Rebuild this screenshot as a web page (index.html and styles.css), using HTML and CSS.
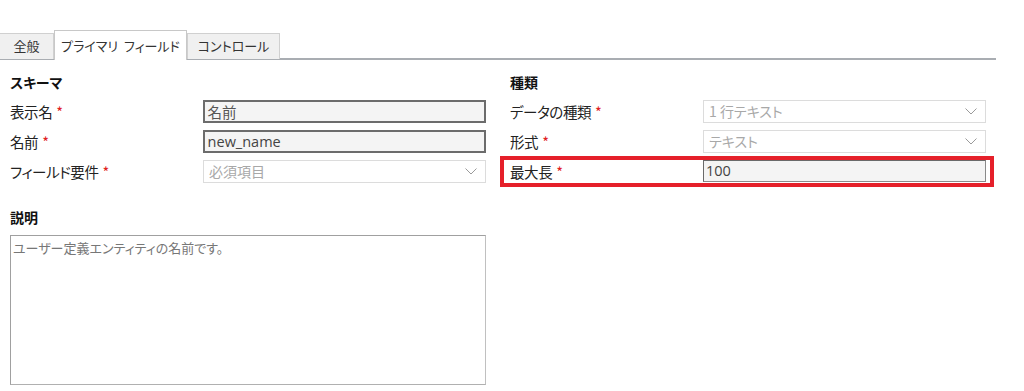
FILE: index.html
```html
<!DOCTYPE html>
<html lang="ja">
<head>
    <meta charset="UTF-8">
    <title>フィールド</title>
    <link rel="stylesheet" href="styles.css">
</head>
<body>
    <div class="tabbar">
        <div class="tab">全般</div>
        <div class="tab active">プライマリ フィールド</div>
        <div class="tab">コントロール</div>
    </div>

    <div class="form">
        <div class="column">
            <h2 class="heading">スキーマ</h2>
            <div class="row">
                <label class="label">表示名<span class="req">*</span></label>
                <div class="textbox">名前</div>
            </div>
            <div class="row">
                <label class="label">名前<span class="req">*</span></label>
                <div class="textbox latin">new_name</div>
            </div>
            <div class="row">
                <label class="label">フィールド要件<span class="req">*</span></label>
                <div class="select">必須項目
                    <svg class="chevron" width="12" height="7" viewBox="0 0 12 7"><polyline points="0.5,0.5 6,6 11.5,0.5" fill="none" stroke="#9a9a9a" stroke-width="1"/></svg>
                </div>
            </div>

            <h2 class="heading desc-heading">説明</h2>
            <div class="textarea">ユーザー定義エンティティの名前です。</div>
        </div>

        <div class="column">
            <h2 class="heading">種類</h2>
            <div class="row">
                <label class="label">データの種類<span class="req">*</span></label>
                <div class="select">1 行テキスト
                    <svg class="chevron" width="12" height="7" viewBox="0 0 12 7"><polyline points="0.5,0.5 6,6 11.5,0.5" fill="none" stroke="#9a9a9a" stroke-width="1"/></svg>
                </div>
            </div>
            <div class="row">
                <label class="label">形式<span class="req">*</span></label>
                <div class="select">テキスト
                    <svg class="chevron" width="12" height="7" viewBox="0 0 12 7"><polyline points="0.5,0.5 6,6 11.5,0.5" fill="none" stroke="#9a9a9a" stroke-width="1"/></svg>
                </div>
            </div>
            <div class="row marked">
                <label class="label">最大長<span class="req">*</span></label>
                <div class="numbox">100</div>
            </div>
        </div>
    </div>
</body>
</html>
```

FILE: styles.css
```css
body {
    margin: 0;
    font-family: "Noto Sans CJK JP", "Noto Sans", sans-serif;
    font-feature-settings: "palt";
    font-size: 14px;
    color: #222;
    background-color: #fff;
}

.tabbar {
    display: flex;
    align-items: flex-end;
    width: 996px;
    height: 27px;
    margin-top: 31px;
    border-bottom: 2px solid #a9adb2;
}

.tab {
    box-sizing: border-box;
    flex-shrink: 0;
    height: 26px;
    margin-bottom: -1px;
    line-height: 24px;
    font-size: 13px;
    text-align: center;
    white-space: nowrap;
    color: #333;
    background-color: #f0f0f0;
    border: 1px solid #d0d0d0;
    border-bottom: none;
}

.tab:first-child {
    width: 54px;
    border-left: none;
}

.tab.active {
    width: 133px;
    height: 30px;
    margin-bottom: -2px;
    line-height: 29px;
    background-color: #fff;
    border-color: #c8c8c8;
    word-spacing: 3px;
}

.tab:last-child {
    width: 93px;
}

.form {
    display: grid;
    grid-template-columns: 476px 476px;
    column-gap: 24px;
    padding-left: 10px;
}

.heading {
    margin: 12px 0 4px;
    font-size: 14px;
    font-weight: bold;
    line-height: 20px;
    color: #111;
}

.desc-heading {
    margin: 21px 0 8px;
}

.row {
    display: flex;
    align-items: center;
    height: 30px;
}

.label {
    width: 193px;
    font-size: 14.5px;
    letter-spacing: -0.4px;
    color: #222;
}

.req {
    margin-left: 4px;
    color: #e02020;
}

.textbox {
    box-sizing: border-box;
    width: 284px;
    height: 23px;
    padding-left: 3px;
    line-height: 19px;
    font-size: 14.5px;
    color: #555;
    background-color: #f4f4f4;
    border: 2px solid #6c6c6c;
}

.latin {
    font-family: "Open Sans", "Noto Sans", sans-serif;
    font-size: 14.5px;
    color: #444;
}

.select {
    box-sizing: border-box;
    display: flex;
    align-items: center;
    justify-content: space-between;
    width: 283px;
    height: 23px;
    padding: 0 6px 0 5px;
    font-size: 14px;
    color: #a8a8a8;
    background-color: #fff;
    border: 1px solid #dcdcdc;
}

.chevron {
    margin-right: 2px;
}

.numbox {
    box-sizing: border-box;
    width: 283px;
    height: 22px;
    padding-left: 2px;
    line-height: 20px;
    font-family: "Open Sans", "Noto Sans", sans-serif;
    font-size: 14.5px;
    color: #444;
    background-color: #f4f4f4;
    border: 1px solid #8a8a8a;
    border-top-color: #6a6a6a;
    border-left-color: #6a6a6a;
}

.marked {
    position: relative;
}

.marked::after {
    content: "";
    position: absolute;
    left: -10px;
    right: -8px;
    top: 0;
    bottom: -1px;
    border: 4px solid #e5202a;
}

.textarea {
    box-sizing: border-box;
    width: 476px;
    height: 150px;
    padding: 2px 2px;
    font-size: 13px;
    color: #777;
    border: 1px solid #a0a0a0;
    border-right-color: #c0c0c0;
    border-bottom-color: #b0b0b0;
}
```
